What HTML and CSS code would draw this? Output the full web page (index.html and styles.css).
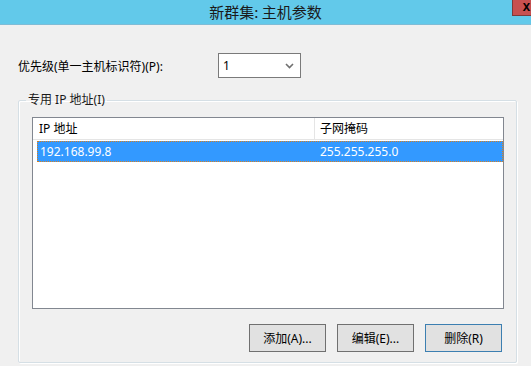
FILE: index.html
```html
<!DOCTYPE html>
<html lang="zh-CN">
<head>
    <meta charset="UTF-8">
    <title>新群集: 主机参数</title>
    <link rel="stylesheet" href="styles.css">
</head>
<body>
    <div class="window">
        <div class="titlebar">
            <span class="title">新群集: 主机参数</span>
            <span class="close">X</span>
        </div>

        <div class="content">
            <div class="priority-row">
                <label class="priority-label">优先级(单一主机标识符)(P):</label>
                <div class="combo">
                    <span class="combo-value">1</span>
                    <svg class="combo-arrow" width="9" height="6" viewBox="0 0 9 6">
                        <polyline points="1,1 4.5,4.5 8,1" fill="none" stroke="#707070" stroke-width="1.6"/>
                    </svg>
                </div>
            </div>

            <fieldset class="group">
                <legend>专用 IP 地址(I)</legend>
                <div class="group-body">
                    <div class="list">
                        <div class="list-header">
                            <div class="hcol hcol-ip">IP 地址</div>
                            <div class="hcol hcol-mask">子网掩码</div>
                        </div>
                        <div class="list-row selected">
                            <div class="cell cell-ip">192.168.99.8</div>
                            <div class="cell cell-mask">255.255.255.0</div>
                        </div>
                    </div>
                    <div class="buttons">
                        <button class="btn">添加(A)...</button>
                        <button class="btn">编辑(E)...</button>
                        <button class="btn btn-default">删除(R)</button>
                    </div>
                </div>
            </fieldset>
        </div>
    </div>
</body>
</html>
```

FILE: styles.css
```css
* {
    box-sizing: border-box;
    margin: 0;
    padding: 0;
}

body {
    width: 531px;
    height: 366px;
    overflow: hidden;
    background-color: #f0f0f0;
    font-family: "Noto Sans", "Noto Sans CJK SC", sans-serif;
    font-size: 12px;
    color: #000;
}

.window {
    position: relative;
    height: 366px;
}

.titlebar {
    height: 25px;
    background-color: #62c9ea;
    border-bottom: 1px solid #7fbcd6;
    text-align: center;
    line-height: 23px;
}

.title {
    font-family: "Noto Sans CJK SC", sans-serif;
    font-size: 15px;
    color: #1a1a1a;
}

/* кнопка закриття частково за краєм вікна */
.close {
    position: absolute;
    top: 0;
    right: 0;
    width: 19px;
    height: 16px;
    background-color: #c75050;
    border: 1px solid #7d3a3a;
    border-top: none;
    border-right: none;
    color: #000;
    font-weight: bold;
    font-size: 11px;
    line-height: 14px;
    text-align: right;
    padding-right: 1px;
}

.content {
    padding: 28px 14px 0 18px;
}

.priority-row {
    display: flex;
    align-items: center;
    height: 25px;
}

.priority-label {
    width: 200px;
}

.combo {
    width: 83px;
    height: 25px;
    background: #fff;
    border: 1px solid #7a7a7a;
    display: flex;
    align-items: center;
    justify-content: space-between;
    padding: 0 6px 0 4px;
}

.combo-value {
    font-size: 12px;
}

.group {
    margin-top: 14px;
    border: 1px solid #d5dfe5;
    border-radius: 2px;
    box-shadow: inset 1px 1px 0 #fff, 1px 1px 0 #fff;
    padding: 0;
    height: 271px;
}

.group legend {
    margin-left: 7px;
    padding: 0 2px;
    line-height: 16px;
    color: #1a1a1a;
}

.group-body {
    padding: 9px 12px 0 13px;
}

.list {
    height: 192px;
    background: #fff;
    border: 1px solid #828790;
}

.list-header {
    display: flex;
    height: 22px;
    border-bottom: 1px solid #e5e5e5;
    line-height: 21px;
}

.hcol {
    padding-left: 6px;
}

.hcol-ip {
    width: 282px;
    border-right: 1px solid #e5e5e5;
}

.hcol-mask {
    flex: 1;
    padding-left: 5px;
}

.list-row {
    display: flex;
    height: 21px;
    margin: 1px 0 0 4px;
    line-height: 19px;
}

.list-row.selected {
    background-color: #3399ff;
    color: #fff;
    border: 1px dotted #d8801f;
}

.cell {
    padding-left: 2px;
}

.cell-ip {
    width: 280px;
}

.buttons {
    display: flex;
    justify-content: flex-end;
    gap: 11px;
    margin: 15px 2px 0 0;
}

.btn {
    width: 77px;
    height: 28px;
    background-color: #e1e1e1;
    border: 1px solid #707070;
    font-family: inherit;
    font-size: 12px;
    color: #000;
}

.btn-default {
    border-color: #3c7fb1;
}
```
